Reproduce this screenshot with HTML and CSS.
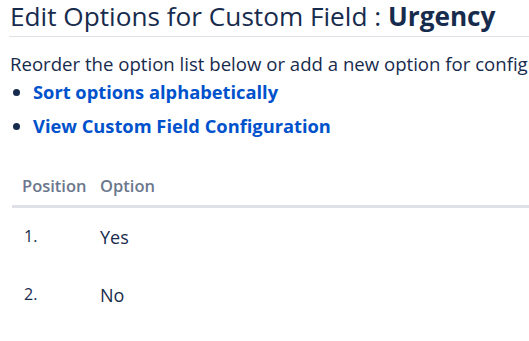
FILE: index.html
```html
<!DOCTYPE html>
<html>
<head>
<meta charset="utf-8">
<link rel="stylesheet" href="styles.css">
</head>
<body>
<div class="page">
  <h1 class="title">Edit Options for Custom Field : <strong>Urgency</strong></h1>
  <p class="intro">Reorder the option list below or add a new option for configuration scheme Default Configuration Scheme for Urgency.</p>
  <ul class="links">
    <li><a href="#">Sort options alphabetically</a></li>
    <li><a href="#">View Custom Field Configuration</a></li>
  </ul>
  <table class="options">
    <thead>
      <tr><th class="pos">Position</th><th class="opt">Option</th></tr>
    </thead>
    <tbody>
      <tr><td class="pos">1.</td><td class="opt">Yes</td></tr>
      <tr><td class="pos">2.</td><td class="opt">No</td></tr>
    </tbody>
  </table>
</div>
</body>
</html>
```
FILE: styles.css
```css
html, body {
  margin: 0;
  padding: 0;
  background: #fff;
  overflow: hidden;
}
body {
  font-family: "Open Sans", "Noto Sans", "Liberation Sans", sans-serif;
  color: #172b4d;
}
.page {
  padding: 0 0 0 9px;
  width: 900px;
}
.title {
  margin: 0;
  padding: 0 0 3px 1px;
  font-size: 26.2px;
  font-weight: 400;
  line-height: 33px;
  border-bottom: 1px solid #dfe1e6;
}
.title strong {
  font-weight: 700;
}
.intro {
  margin: 14px 0 0 1px;
  font-size: 18.6px;
  line-height: 26px;
  white-space: nowrap;
}
.links {
  margin: 0;
  padding: 0 0 0 24px;
  font-size: 18.3px;
  line-height: 26px;
}
.links li {
  margin: 2px 0 8px;
}
.links li::marker {
  color: #172b4d;
}
.links a {
  color: #0052cc;
  font-weight: 700;
  text-decoration: none;
}
.options {
  margin: 29px 0 0 3px;
  border-collapse: collapse;
  width: 600px;
}
.options th {
  text-align: left;
  font-size: 16.5px;
  font-weight: 600;
  color: #6b778c;
  padding: 6px 10px 8px;
  border-bottom: 3px solid #dfe1e6;
}
.options th.pos {
  width: 68px;
}
.options td {
  padding: 18px 10px 17px;
  vertical-align: top;
  line-height: 23px;
}
.options td.pos {
  font-size: 16px;
  padding-top: 17px;
  padding-left: 12px;
}
.options td.opt {
  font-size: 18px;
}
.options th.opt, .options td.opt {
  padding-left: 0;
}
```
